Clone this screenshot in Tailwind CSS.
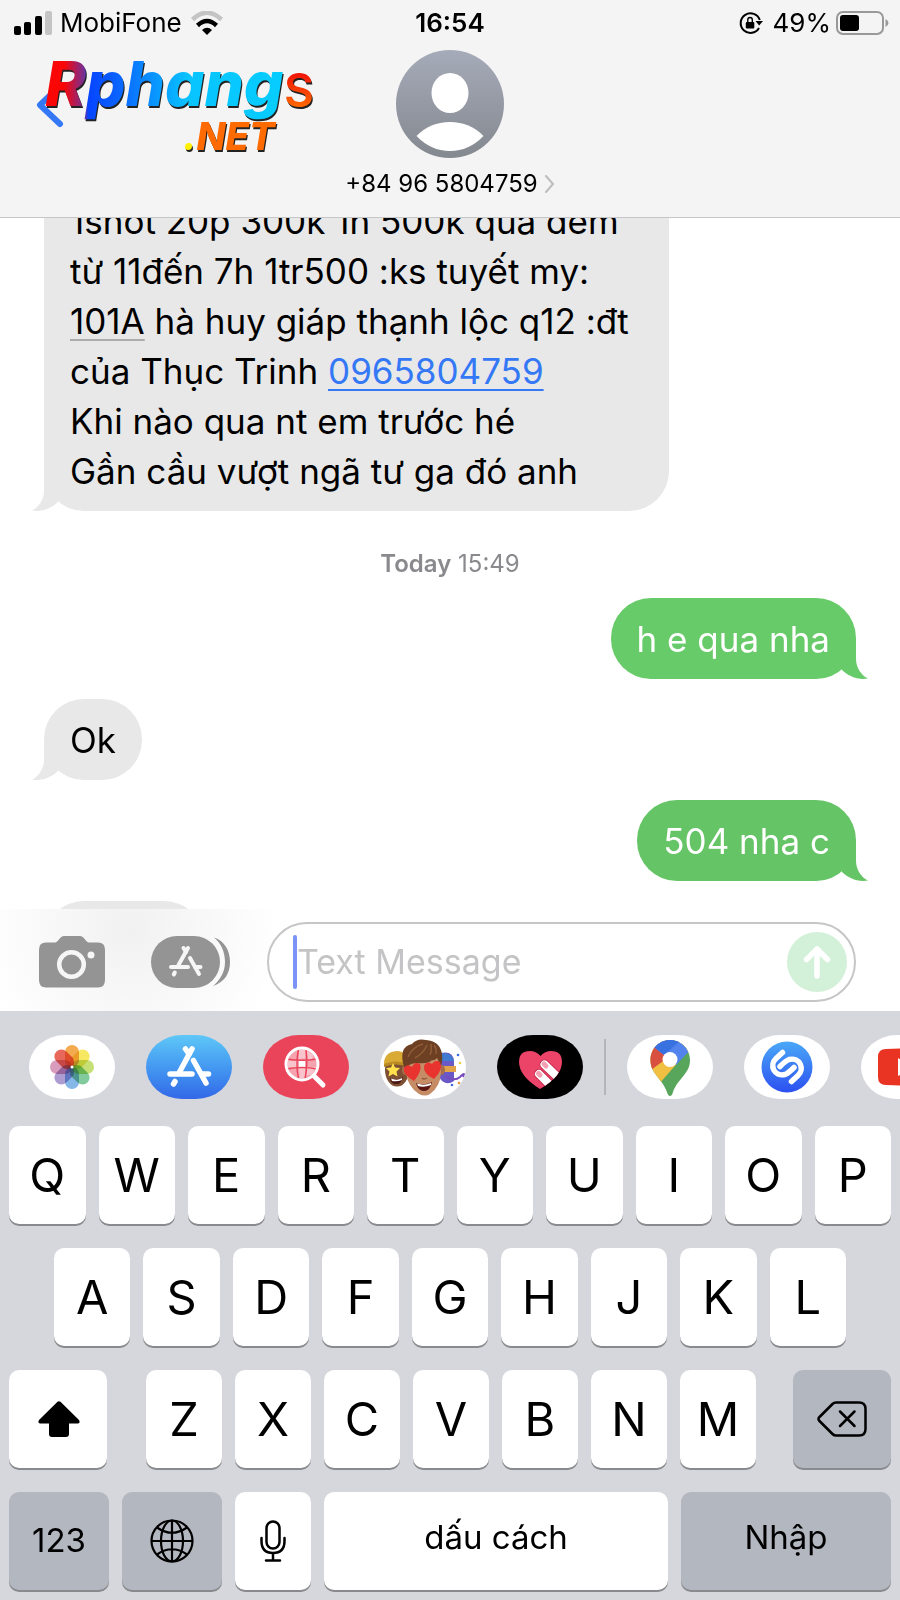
<!doctype html>
<html lang="vi">
<head>
    <meta charset="UTF-8">
    <meta name="viewport" content="width=device-width, initial-scale=1.0">
    <script src="https://cdn.jsdelivr.net/npm/@tailwindcss/browser@4"></script>
    <title>Messages</title>
</head>
<body class="bg-white font-[Inter,sans-serif] text-black">

<div class="flex h-screen flex-col overflow-hidden">

    <!-- status bar + contact -->
    <header class="relative shrink-0 border-b border-[#c6c6c6] bg-[#f4f4f4] pb-[18px]">
        <div class="grid grid-cols-3 items-center px-[14px] pt-[6px] text-[26px] leading-[34px]">
            <div class="flex items-center gap-2">
                <svg class="h-6 w-[38px]" viewBox="0 0 38 24">
                    <rect x="0" y="15" width="7" height="9" rx="2"/>
                    <rect x="10" y="11" width="7" height="13" rx="2"/>
                    <rect x="21" y="5" width="7" height="19" rx="2"/>
                    <rect x="31" y="0" width="7" height="24" rx="2" fill="#c4c4c4"/>
                </svg>
                <span>MobiFone</span>
                <svg class="h-6 w-[34px]" viewBox="0 0 34 24">
                    <path d="M2.500 8.500Q17-5 31.500 8.500" fill="none" stroke="#c4c4c4" stroke-width="4.500"/>
                    <path d="M7.500 14.500Q17 5.500 26.500 14.500" fill="none" stroke="#000" stroke-width="4.500"/>
                    <path d="M12 19Q17 14.500 22 19L17 24Z"/>
                </svg>
            </div>
            <div class="text-center font-semibold">16:54</div>
            <div class="flex items-center justify-end">
                <svg class="mr-[10px] h-6 w-6" viewBox="0 0 24 24">
                    <path d="M20 17A9.800 9.800 0 1 1 20.800 9" fill="none" stroke="#000" stroke-width="2"/>
                    <path d="M16.500 10H24L20.200 14.500Z"/>
                    <rect x="6.800" y="11" width="8.500" height="6.500" rx="1"/>
                    <path d="M8.800 11.500V8.700a2.250 2.250 0 0 1 4.500 0V11.500" fill="none" stroke="#000" stroke-width="1.400"/>
                </svg>
                <span>49%</span>
                <svg class="-mr-[3px] ml-[5px] h-6 w-[53px]" viewBox="0 0 53 24">
                    <rect x="1" y="1" width="46" height="22" rx="6" fill="none" stroke="#999" stroke-width="2"/>
                    <rect x="4" y="4" width="19" height="16" rx="3"/>
                    <path d="M49.500 8q3 1.500 3 4t-3 4Z" fill="#999"/>
                </svg>
            </div>
        </div>

        <div class="flex flex-col items-center pt-[10px]">
            <svg class="size-[108px]" viewBox="0 0 108 108">
                <defs>
                    <linearGradient id="avatar" x1="0" y1="0" x2="0" y2="1">
                        <stop offset="0" stop-color="#a6abb9"/>
                        <stop offset="1" stop-color="#84888f"/>
                    </linearGradient>
                </defs>
                <circle cx="54" cy="54" r="54" fill="url(#avatar)"/>
                <ellipse cx="54" cy="43" rx="18.500" ry="20" fill="#fff"/>
                <path d="M20.500 86Q34 72 54 72T87.500 86Q73 101 54 101T20.500 86Z" fill="#fff"/>
            </svg>
            <button type="button" class="mt-[11px] flex items-center gap-[6px] text-[24px] leading-[30px]">
                +84 96 5804759
                <svg class="h-[18px] w-[11px]" viewBox="0 0 11 18" fill="none" stroke="#bdbdbf" stroke-width="2" stroke-linecap="round">
                    <path d="M2 1L9 9L2 17"/>
                </svg>
            </button>
        </div>

        <!-- back chevron with the site logo over it -->
        <a href="#" aria-label="Back" class="absolute left-9 top-14">
            <svg class="h-[100px] w-[290px] font-[Inter,sans-serif]" viewBox="0 0 290 100">
                <defs>
                    <linearGradient id="logo" gradientUnits="userSpaceOnUse" x1="9" y1="0" x2="249" y2="0">
                        <stop offset="0.080" stop-color="#fb0606"/>
                        <stop offset="0.165" stop-color="#70309a"/>
                        <stop offset="0.180" stop-color="#0644ff"/>
                        <stop offset="0.300" stop-color="#0a62ff"/>
                        <stop offset="0.600" stop-color="#08c4ff"/>
                        <stop offset="1" stop-color="#06cdff"/>
                    </linearGradient>
                    <linearGradient id="logoS" gradientUnits="userSpaceOnUse" x1="0" y1="16" x2="0" y2="52">
                        <stop offset="0" stop-color="#f01005"/>
                        <stop offset="1" stop-color="#ff6a00"/>
                    </linearGradient>
                </defs>
                <path d="M24 30L4 49L24 68" fill="none" stroke="#3478f6" stroke-width="6" stroke-linecap="round" stroke-linejoin="round"/>
                <g class="drop-shadow-[1px_2px_0_#222]">
                    <text x="9" y="50" font-size="62" font-weight="800" font-style="italic" fill="url(#logo)">Rphang</text>
                    <text x="248" y="51" font-size="46" font-weight="600" fill="url(#logoS)">S</text>
                    <text x="147" y="94" font-size="38" font-weight="800" font-style="italic" fill="#ff6b00"><tspan fill="#fff000">.</tspan>NET</text>
                </g>
            </svg>
        </a>
    </header>

    <!-- messages -->
    <main class="min-h-0 flex-1 overflow-hidden px-11">
        <div class="-mt-[38px] flex flex-col text-[35px] leading-[50px]">
            <div class="relative self-start rounded-[40px] bg-[#e8e8e8] pt-4 pr-10 pb-[15px] pl-[26px]">
                <svg class="absolute bottom-0 -left-3 h-10 w-[26px]" viewBox="0 0 26 40" fill="#e8e8e8">
                    <path d="M12 0V20C12 29 6 37 0 39.500C10 41.500 20 37 26 31V0Z"/>
                </svg>
                <p>1shot 20p 300k 1h 500k qua đêm<br>
                    từ 11đến 7h 1tr500 :ks tuyết my:<br>
                    <a href="#" class="underline decoration-[#acacae] decoration-2 underline-offset-5">101A</a> hà huy giáp thạnh lộc q12 :đt<br>
                    của Thục Trinh <a href="tel:0965804759" class="text-[#3478f6] underline decoration-2 underline-offset-5">0965804759</a><br>
                    Khi nào qua nt em trước hé<br>
                    Gần cầu vượt ngã tư ga đó anh</p>
            </div>

            <div class="mt-[41px] mb-[22px] text-center text-[24px] leading-6 text-[#8a8a8e]">
                <span class="font-semibold">Today</span> 15:49
            </div>

            <div class="relative self-end rounded-[40px] bg-[#68cb69] px-[26px] pt-4 pb-[15px] text-white">
                <svg class="absolute -right-3 bottom-0 h-10 w-[26px]" viewBox="0 0 26 40" fill="#68cb69">
                    <path d="M14 0V20C14 29 20 37 26 39.500C16 41.500 6 37 0 31V0Z"/>
                </svg>
                <p class="relative">h e qua nha</p>
            </div>

            <div class="relative mt-5 self-start rounded-[40px] bg-[#e8e8e8] px-[26px] pt-4 pb-[15px]">
                <svg class="absolute bottom-0 -left-3 h-10 w-[26px]" viewBox="0 0 26 40" fill="#e8e8e8">
                    <path d="M12 0V20C12 29 6 37 0 39.500C10 41.500 20 37 26 31V0Z"/>
                </svg>
                <p class="relative">Ok</p>
            </div>

            <div class="relative mt-5 self-end rounded-[40px] bg-[#65c466] px-[26px] pt-4 pb-[15px] text-white">
                <svg class="absolute -right-3 bottom-0 h-10 w-[26px]" viewBox="0 0 26 40" fill="#65c466">
                    <path d="M14 0V20C14 29 20 37 26 39.500C16 41.500 6 37 0 31V0Z"/>
                </svg>
                <p class="relative">504 nha c</p>
            </div>

            <div class="mt-5 h-[81px] w-40 self-start rounded-[40px] bg-[#e8e8e8]"></div>
        </div>
    </main>

    <!-- compose bar -->
    <form class="flex shrink-0 items-center bg-[radial-gradient(circle_at_130px_20px,#f1f1f1,#fff_150px)] pt-[13px] pr-11 pb-[9px] pl-[39px]">
        <button type="button" aria-label="Camera">
            <svg class="h-[52px] w-[66px]" viewBox="0 0 66 52">
                <path d="M7 6.500H16C19 6.500 21 0 25 0H41C45 0 47 6.500 50 6.500H59Q66 6.500 66 13.500V44Q66 51.500 59 51.500H7Q0 51.500 0 44V13.500Q0 6.500 7 6.500Z" fill="#949494"/>
                <circle cx="32.500" cy="28.500" r="12.300" fill="none" stroke="#f6f6f6" stroke-width="4.500"/>
                <circle cx="52" cy="19" r="3.500" fill="#f6f6f6"/>
            </svg>
        </button>
        <button type="button" aria-label="Apps" class="ml-[46px]">
            <svg class="h-[52px] w-20" viewBox="0 0 80 52">
                <rect width="69" height="52" rx="26" fill="#949494"/>
                <path d="M63 1.500C74 5 79 15 79 26S74 46 62 50C69 44 74 36 74 26S70 7 63 1.500Z" fill="#949494"/>
                <g stroke="#f6f6f6" stroke-width="4" stroke-linecap="round">
                    <path d="M37 12L27.500 29"/>
                    <path d="M32.500 12L35 16"/>
                    <path d="M39 22L48 38"/>
                    <path d="M20 31H37M44 31H49.500"/>
                    <path d="M23.800 36.500L22.800 38.500"/>
                </g>
            </svg>
        </button>
        <div class="relative ml-[36px] flex h-20 min-w-0 flex-1 items-center rounded-[40px] border-2 border-[#c6c6c8] bg-white pr-[7px] pl-[28px]">
            <span class="absolute left-6 h-[54px] w-1 rounded-full bg-[#7b93f5]"></span>
            <input type="text" aria-label="Text Message" placeholder="Text Message"
                   class="min-w-0 flex-1 bg-transparent text-[34px] leading-[50px] placeholder:text-[#c4c4c6] focus:outline-none">
            <button type="submit" aria-label="Send">
                <svg class="size-[60px]" viewBox="0 0 60 60">
                    <circle cx="30" cy="30" r="30" fill="#d3f0d9"/>
                    <path d="M30 44V17M19.500 27.500L30 17L40.500 27.500" fill="none" stroke="#fff" stroke-width="5.500" stroke-linecap="round" stroke-linejoin="round"/>
                </svg>
            </button>
        </div>
    </form>

    <!-- keyboard -->
    <section class="shrink-0 bg-[#d6d7dc] pt-6 pb-[10px]">
        <div class="flex items-center gap-[31px] overflow-hidden pl-[29px]">
            <button type="button" aria-label="Photos" class="shrink-0 overflow-hidden rounded-[36px/32px] bg-white">
                <svg class="h-16 w-[86px]" viewBox="0 0 86 64">
                    <g class="opacity-90" transform="translate(43 32)">
                        <rect class="mix-blend-multiply" x="-7" y="-22" width="14" height="22" rx="7" fill="#f3a13c"/>
                        <rect class="mix-blend-multiply" x="-7" y="-22" width="14" height="22" rx="7" fill="#f5e650" transform="rotate(45)"/>
                        <rect class="mix-blend-multiply" x="-7" y="-22" width="14" height="22" rx="7" fill="#c0dc68" transform="rotate(90)"/>
                        <rect class="mix-blend-multiply" x="-7" y="-22" width="14" height="22" rx="7" fill="#74c592" transform="rotate(135)"/>
                        <rect class="mix-blend-multiply" x="-7" y="-22" width="14" height="22" rx="7" fill="#78b0e6" transform="rotate(180)"/>
                        <rect class="mix-blend-multiply" x="-7" y="-22" width="14" height="22" rx="7" fill="#a592cd" transform="rotate(225)"/>
                        <rect class="mix-blend-multiply" x="-7" y="-22" width="14" height="22" rx="7" fill="#d692b6" transform="rotate(270)"/>
                        <rect class="mix-blend-multiply" x="-7" y="-22" width="14" height="22" rx="7" fill="#e5584a" transform="rotate(315)"/>
                    </g>
                    <circle cx="43" cy="32" r="1.500" fill="#fff"/>
                </svg>
            </button>
            <button type="button" aria-label="App Store" class="shrink-0 overflow-hidden rounded-[36px/32px] bg-linear-to-b from-[#5fc7f7] to-[#3467e8]">
                <svg class="h-16 w-[86px]" viewBox="0 0 86 64" fill="none" stroke="#fff" stroke-width="5.500" stroke-linecap="round">
                    <path d="M46 14L33.500 37"/>
                    <path d="M39.500 14L43 19"/>
                    <path d="M47.500 25.500L60 48"/>
                    <path d="M24 39H46M56 39H62.500"/>
                    <path d="M29 46.500L27.500 49"/>
                </svg>
            </button>
            <button type="button" aria-label="Images" class="shrink-0 overflow-hidden rounded-[36px/32px] bg-[#ea445a]">
                <svg class="h-16 w-[86px]" viewBox="0 0 86 64" fill="none">
                    <circle cx="39" cy="29" r="15" fill="#f6a3b0"/>
                    <path d="M36 15L42 14V23L36 24ZM25 26H35V32H25ZM43 33L53 32L49 39L42 41ZM36 33H42V43H37ZM44 16L50 20L49 25H43Z" fill="#f9c5cd"/>
                    <rect x="36" y="26" width="6" height="6" fill="#fff"/>
                    <path d="M35.500 14Q32.500 29 35.500 44M43 14Q45 29 42 44M24 24Q39 26.500 54 24M24 34Q39 31 54 34" stroke="#ea445a" stroke-width="1.500"/>
                    <circle cx="39" cy="29" r="16" stroke="#fff" stroke-width="3"/>
                    <path d="M51 41L60 50" stroke="#fff" stroke-width="5" stroke-linecap="round"/>
                </svg>
            </button>
            <button type="button" aria-label="Memoji" class="shrink-0 overflow-hidden rounded-[36px/32px] bg-white">
                <svg class="h-16 w-[86px]" viewBox="0 0 86 64">
                    <!-- left head, star eyes -->
                    <ellipse cx="17" cy="35" rx="12" ry="16.500" fill="#7d5034"/>
                    <path d="M4 31Q3 17 17 16Q28 16 29 31Q16 24 4 31Z" fill="#d9ab35"/>
                    <path d="M4 29Q16 24 28 29V32Q16 27 4 32Z" fill="#b98a22"/>
                    <path d="M13 28l2 4.500 5 .5-3.500 3.500 1 5-4.500-2.500-4.500 2.500 1-5L6 33l5-.5Z" fill="#ffe14d"/>
                    <path d="M10 43Q17 46 23 42Q21 50 16 49Q11 49 10 43Z" fill="#4a1712"/>
                    <path d="M11 43.500Q17 46 22 43V45Q17 47 12 46Z" fill="#fff"/>
                    <!-- right head -->
                    <path d="M60 18Q74 15 74 27V46Q65 52 59 42Z" fill="#6a58c6"/>
                    <path d="M60 19Q71 16 74 26H60Z" fill="#3f7bd0"/>
                    <path d="M60 31H76V37H60Z" fill="#e2a24a"/>
                    <path d="M66 41Q74 47 80 42Q86 36 83 42" fill="none" stroke="#7a4bbd" stroke-width="2"/>
                    <circle cx="78" cy="20" r="1.300" fill="#3a6be0"/>
                    <circle cx="80" cy="28" r="1.300" fill="#f0d23c"/>
                    <circle cx="72" cy="50" r="1.300" fill="#3a6be0"/>
                    <circle cx="79" cy="48" r="1.300" fill="#e8953a"/>
                    <!-- middle head, heart eyes -->
                    <ellipse cx="25" cy="35" rx="3" ry="5" fill="#a86d49"/>
                    <ellipse cx="62" cy="35" rx="3" ry="5" fill="#a86d49"/>
                    <path d="M26 25Q26 12 44 12T61 25V38Q60 52 50 59Q45 62 39 59Q28 52 26 38Z" fill="#c58c66"/>
                    <path d="M24 32Q18 12 32 9Q37 3 46 5Q60 6 62 19Q63 28 60 32Q59 26 57 23Q54 26 52 25Q48 29 38 28Q30 28 27 32Z" fill="#6d4023"/>
                    <path d="M28 22Q32 12 43 9M35 23Q43 19 47 10M50 20Q52 16 51 9M56 19Q57 14 54 10" fill="none" stroke="#8f5c38" stroke-width="1.500"/>
                    <path d="M34 46Q22 39 24 33Q27 28 32 32Q35 26 40 29Q43 35 34 46Z" fill="#e8332f"/>
                    <path d="M54 44Q43 39 44 31Q47 25 52 29Q55 24 60 27Q64 34 54 44Z" fill="#e8332f"/>
                    <path d="M42 43Q44 45 47 43" fill="none" stroke="#925b3c" stroke-width="1.500"/>
                    <path d="M36 48Q44 51 52 47Q50 56 44 56Q38 56 36 48Z" fill="#5b1712"/>
                    <path d="M37 48.500Q44 51 51 48V50Q44 53 38 51Z" fill="#fff"/>
                </svg>
            </button>
            <button type="button" aria-label="Digital Touch" class="shrink-0 overflow-hidden rounded-[36px/32px] bg-black">
                <svg class="h-16 w-[86px]" viewBox="0 0 86 64">
                    <defs>
                        <clipPath id="heart">
                            <path d="M43 54Q22 41 22 27Q22 16 33 16Q39 16 43.500 21Q48 16 54 16Q65 16 65 27Q65 41 43 54Z"/>
                        </clipPath>
                    </defs>
                    <g clip-path="url(#heart)">
                        <rect x="20" y="14" width="46" height="42" fill="#ec4368"/>
                        <g fill="none" stroke-linecap="round">
                            <path d="M47.500 29.500L69 50M42 39L60 57" stroke="#c52f50" stroke-width="10"/>
                            <path d="M47.500 29.500L69 50M42 39L60 57" stroke="#fff" stroke-width="8"/>
                            <path d="M47 29L49 31M41.500 38.500L43 40" stroke="#f3a0b2" stroke-width="5"/>
                        </g>
                    </g>
                </svg>
            </button>
            <div class="-mx-[10px] h-14 w-[2px] shrink-0 bg-[#b4b5b9]"></div>
            <button type="button" aria-label="Google Maps" class="shrink-0 overflow-hidden rounded-[36px/32px] bg-white">
                <svg class="h-16 w-[86px]" viewBox="0 0 86 64">
                    <defs>
                        <clipPath id="pin">
                            <path d="M43 5C32 5 23.500 14 23.500 25C23.500 39 35 43 40 57Q41 61 43 61T46 57C51 43 63 39 63 25C63 14 54 5 43 5Z"/>
                        </clipPath>
                    </defs>
                    <g clip-path="url(#pin)">
                        <rect x="20" y="0" width="46" height="64" fill="#58a55c"/>
                        <path d="M20 0H75L61 16L32 49L20 60Z" fill="#f1bf42"/>
                        <path d="M20 3L43 21L24 35L20 46Z" fill="#d85140"/>
                        <path d="M24 10L37 20L43 24L49 30L65 13V0H20Z" fill="#5383ec"/>
                        <path d="M22 8L37 20L54 5L43 0Z" fill="#3871e0"/>
                    </g>
                    <circle cx="43" cy="24.500" r="7.500" fill="#fff"/>
                </svg>
            </button>
            <button type="button" aria-label="Shazam" class="shrink-0 overflow-hidden rounded-[36px/32px] bg-white">
                <svg class="h-16 w-[86px]" viewBox="0 0 86 64">
                    <defs>
                        <linearGradient id="shazam" x1="0" y1="0" x2="0" y2="1">
                            <stop offset="0" stop-color="#4aa8f8"/>
                            <stop offset="1" stop-color="#2c50f0"/>
                        </linearGradient>
                    </defs>
                    <circle cx="43" cy="32" r="25.500" fill="url(#shazam)"/>
                    <g fill="none" stroke="#fff" stroke-width="5.500" stroke-linecap="round">
                        <path d="M38.500 17.500L32 23.500C25 30 30 42 41 39.500Q44 38.500 50 32.500"/>
                        <path d="M47.500 46.500L54 40.500C61 34 56 22 45 24.500Q42 25.500 36 31.500"/>
                    </g>
                </svg>
            </button>
            <button type="button" aria-label="YouTube" class="shrink-0 overflow-hidden rounded-[36px/32px] bg-white">
                <svg class="h-16 w-[86px]" viewBox="0 0 86 64">
                    <path d="M25 14Q43 13 61 14Q69 14 69 22V42Q69 50 61 50Q43 51 25 50Q17 50 17 42V22Q17 14 25 14Z" fill="#e93323"/>
                    <path d="M37 23L53 32L37 41Z" fill="#fff"/>
                </svg>
            </button>
        </div>

        <div class="mt-[27px] flex flex-col gap-6 px-[9px] text-[47px]">
            <div id="row-1" class="grid grid-cols-10 gap-[13px]"></div>
            <div id="row-2" class="grid grid-cols-9 gap-[13px] px-[45px]"></div>
            <div class="flex">
                <button type="button" aria-label="Shift" class="flex h-[98px] w-[98px] items-center justify-center rounded-[10px] bg-white shadow-[0_2px_0_#898a8d]">
                    <svg class="ml-[2px] h-9 w-[42px]" viewBox="0 0 42 36">
                        <path d="M19.500 .8Q21 -.5 22.500 .8L41 19Q42.500 22 40 22.500H31V33Q31 36 28 36H14Q11 36 11 33V22.500H2Q-.5 22 1 19Z"/>
                    </svg>
                </button>
                <div id="row-3" class="grid flex-1 grid-cols-7 gap-[13px] pr-[37px] pl-[39px]"></div>
                <button type="button" aria-label="Delete" class="flex h-[98px] w-[98px] items-center justify-center rounded-[10px] bg-[#b3b7c0] shadow-[0_2px_0_#898a8d]">
                    <svg class="h-9 w-[50px]" viewBox="0 0 50 36" fill="none" stroke="#000" stroke-width="2.500" stroke-linecap="round" stroke-linejoin="round">
                        <path d="M19 1.500H42Q48.500 1.500 48.500 8V28Q48.500 34.500 42 34.500H19Q17 34.500 15.500 33L2 19.500Q1 18 2 16.500L15.500 3Q17 1.500 19 1.500Z"/>
                        <path d="M23 10.500L37.500 25M37.500 10.500L23 25"/>
                    </svg>
                </button>
            </div>
            <div class="flex gap-[13px] text-[33px]">
                <button type="button" class="h-[98px] w-[100px] rounded-[10px] bg-[#b3b7c0] shadow-[0_2px_0_#898a8d]">123</button>
                <button type="button" aria-label="Next keyboard" class="flex h-[98px] w-[100px] items-center justify-center rounded-[10px] bg-[#b3b7c0] shadow-[0_2px_0_#898a8d]">
                    <svg class="size-11" viewBox="0 0 44 44" fill="none" stroke="#000" stroke-width="2.200">
                        <circle cx="22" cy="22" r="20.500"/>
                        <ellipse cx="22" cy="22" rx="11" ry="20.500"/>
                        <path d="M22 1.500V42.500M1.500 22H42.500M7 8.500Q22 19 37 8.500M7 35.500Q22 25 37 35.500"/>
                    </svg>
                </button>
                <button type="button" aria-label="Dictate" class="flex h-[98px] w-[76px] items-center justify-center rounded-[10px] bg-white shadow-[0_2px_0_#898a8d]">
                    <svg class="h-[42px] w-[26px]" viewBox="0 0 26 42" fill="none" stroke="#000" stroke-width="2.500" stroke-linecap="round">
                        <rect x="6.500" y="1.500" width="13" height="27" rx="6.500"/>
                        <path d="M1.500 18V21Q1.500 33 13 33T24.500 21V18M13 33V40M6 40.500H20"/>
                    </svg>
                </button>
                <button type="button" class="h-[98px] flex-1 rounded-[10px] bg-white pb-[6px] shadow-[0_2px_0_#898a8d]">dấu cách</button>
                <button type="button" class="h-[98px] w-[210px] rounded-[10px] bg-[#b3b7c0] pb-[6px] shadow-[0_2px_0_#898a8d]">Nhập</button>
            </div>
        </div>
    </section>
</div>

<script>
    const rows = {
        "row-1": "QWERTYUIOP",
        "row-2": "ASDFGHJKL",
        "row-3": "ZXCVBNM",
    };

    for (const id in rows) {
        const row = document.getElementById(id);
        rows[id].split("").forEach((letter) => {
            row.innerHTML += `<button type="button" class="h-[98px] rounded-[10px] bg-white shadow-[0_2px_0_#898a8d]">${letter}</button>`;
        });
    }
</script>
</body>
</html>
